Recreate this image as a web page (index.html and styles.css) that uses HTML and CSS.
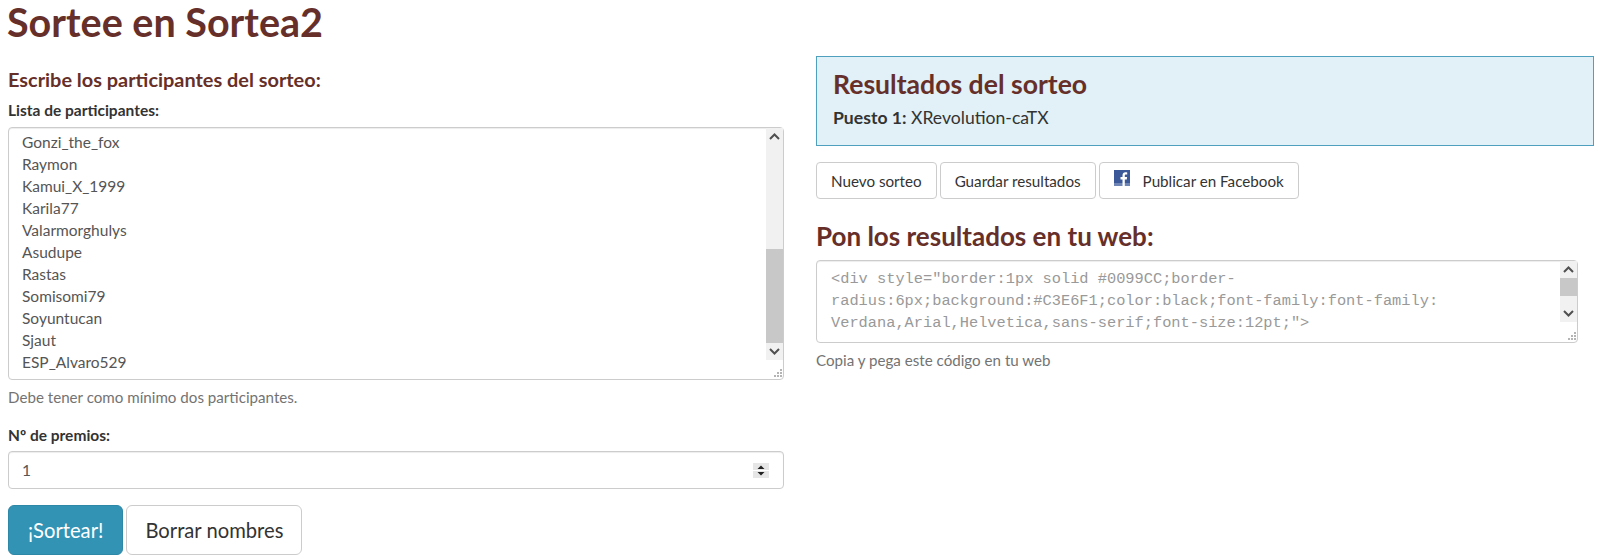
FILE: index.html
```html
<!DOCTYPE html>
<html lang="es">

<head>
    <meta charset="UTF-8">
    <meta name="viewport" content="width=device-width, initial-scale=1.0">
    <title>Sortee en Sortea2</title>
    <link rel="stylesheet" href="styles.css">
</head>

<body>
    <h1>Sortee en Sortea2</h1>

    <div class="columns">
        <!-- Participants form -->
        <form class="draw-form">
            <h2 class="form-title">Escribe los participantes del sorteo:</h2>

            <label class="field-label" for="names">Lista de participantes:</label>
            <div class="text-box names-box">
                <textarea id="names" class="text-area" spellcheck="false">Gonzi_the_fox
Raymon
Kamui_X_1999
Karila77
Valarmorghulys
Asudupe
Rastas
Somisomi79
Soyuntucan
Sjaut
ESP_Alvaro529</textarea>
                <div class="scrollbar">
                    <span class="scroll-btn">
                        <svg width="11" height="7" viewBox="0 0 11 7"><path d="M1 6l4.5-4.5L10 6" fill="none" stroke="#505050" stroke-width="2"/></svg>
                    </span>
                    <div class="scroll-track names-track"><div class="scroll-thumb names-thumb"></div></div>
                    <span class="scroll-btn">
                        <svg width="11" height="7" viewBox="0 0 11 7"><path d="M1 1l4.5 4.5L10 1" fill="none" stroke="#505050" stroke-width="2"/></svg>
                    </span>
                    <svg class="grip" width="9" height="9" viewBox="0 0 9 9"><path d="M7 0h2v2H7zM4 3h2v2H4zM7 3h2v2H7zM1 6h2v2H1zM4 6h2v2H4zM7 6h2v2H7z" fill="#b4b4b4"/></svg>
                </div>
            </div>
            <p class="help-text">Debe tener como mínimo dos participantes.</p>

            <label class="field-label prizes-label" for="prizes">Nº de premios:</label>
            <div class="text-box number-box">
                <input id="prizes" class="number-input" type="text" value="1">
                <span class="spinner">
                    <svg width="16" height="15" viewBox="0 0 16 15"><path d="M0 0h16v7H0zM0 8h16v7H0z" fill="#e6e6e6"/><path d="M8 2.5l3.5 3.5h-7zM8 12.5L4.5 9h7z" fill="#222"/></svg>
                </span>
            </div>

            <div class="btn-row">
                <button type="button" class="btn btn-large btn-primary">¡Sortear!</button>
                <button type="button" class="btn btn-large">Borrar nombres</button>
            </div>
        </form>

        <!-- Results -->
        <div class="results">
            <div class="result-panel">
                <h2 class="panel-title">Resultados del sorteo</h2>
                <p class="result-line"><strong>Puesto 1:</strong> XRevolution-caTX</p>
            </div>

            <div class="btn-row">
                <button type="button" class="btn">Nuevo sorteo</button>
                <button type="button" class="btn">Guardar resultados</button>
                <button type="button" class="btn btn-fb">
                    <svg class="fb-icon" width="16" height="16" viewBox="0 0 16 16"><rect width="16" height="16" fill="#3b5998"/><rect y="13" width="16" height="3" fill="#6d84b4"/><path d="M10.8 16V9.5h2l.3-2.4h-2.3V5.7c0-.7.2-1.1 1.2-1.1h1.2V2.4c-.3 0-.9-.1-1.7-.1-1.8 0-3 1.1-3 3.1v1.7h-2v2.4h2V16z" fill="#fff"/></svg>
                    Publicar en Facebook
                </button>
            </div>

            <h2 class="embed-title">Pon los resultados en tu web:</h2>
            <div class="text-box code-box">
                <textarea class="text-area code-area" spellcheck="false">&lt;div style="border:1px solid #0099CC;border-radius:6px;background:#C3E6F1;color:black;font-family:font-family: Verdana,Arial,Helvetica,sans-serif;font-size:12pt;"&gt;</textarea>
                <div class="scrollbar">
                    <span class="scroll-btn">
                        <svg width="11" height="7" viewBox="0 0 11 7"><path d="M1 6l4.5-4.5L10 6" fill="none" stroke="#505050" stroke-width="2"/></svg>
                    </span>
                    <div class="scroll-track code-track"><div class="scroll-thumb code-thumb"></div></div>
                    <span class="scroll-btn">
                        <svg width="11" height="7" viewBox="0 0 11 7"><path d="M1 1l4.5 4.5L10 1" fill="none" stroke="#505050" stroke-width="2"/></svg>
                    </span>
                    <svg class="grip" width="9" height="9" viewBox="0 0 9 9"><path d="M7 0h2v2H7zM4 3h2v2H4zM7 3h2v2H7zM1 6h2v2H1zM4 6h2v2H4zM7 6h2v2H7z" fill="#b4b4b4"/></svg>
                </div>
            </div>
            <p class="help-text">Copia y pega este código en tu web</p>
        </div>
    </div>
</body>

</html>
```

FILE: styles.css
```css
/* General Styles */
body {
    font-family: Lato, "Open Sans", sans-serif;
    font-size: 16px;
    line-height: 22px;
    color: #333;
    background-color: #fff;
    margin: 0;
    padding: 0 6px 0 8px;
    height: 557px;
    overflow: hidden;
    box-sizing: border-box;
}

h1,
h2 {
    color: #662f29;
    font-weight: 700;
    margin: 0;
}

h1 {
    font-size: 39.5px;
    line-height: 44px;
    margin-left: -1px;
}

.columns {
    display: grid;
    grid-template-columns: 776px 778px;
    column-gap: 32px;
}

/* Left form */
.form-title {
    font-size: 19.9px;
    line-height: 24px;
    margin-top: 23px;
}

.field-label {
    display: block;
    font-weight: 700;
    font-size: 15.5px;
    line-height: 22px;
    margin-top: 8px;
    margin-bottom: 6px;
}

.prizes-label {
    margin-top: 16px;
    margin-bottom: 5px;
}

.help-text {
    color: #737373;
    font-size: 15.15px;
    margin: 6px 0 0;
}

/* Boxes */
.text-box {
    display: flex;
    border: 1px solid #ccc;
    border-radius: 4px;
    box-shadow: inset 0 1px 1px rgba(0, 0, 0, 0.075);
    background-color: #fff;
    box-sizing: border-box;
}

.names-box {
    height: 253px;
}

.code-box {
    width: 762px;
    height: 83px;
}

.number-box {
    height: 38px;
    align-items: center;
    padding-right: 14px;
}

.text-area {
    flex: 1;
    min-width: 0;
    border: none;
    outline: none;
    resize: none;
    overflow: hidden;
    background: transparent;
    font-family: inherit;
    font-size: 15.5px;
    line-height: 22px;
    color: #555;
    padding: 3px 13px 0;
    margin: 0;
}

.code-area {
    font-family: "Liberation Mono", monospace;
    font-size: 15.33px;
    color: #999;
    padding: 7px 14px 0;
}

.number-input {
    flex: 1;
    min-width: 0;
    border: none;
    outline: none;
    background: transparent;
    font-family: inherit;
    font-size: 15.5px;
    color: #555;
    padding: 0 13px;
}

.spinner {
    display: flex;
}

/* Scrollbar */
.scrollbar {
    width: 17px;
    display: flex;
    flex-direction: column;
    position: relative;
}

.scroll-btn {
    height: 17px;
    background-color: #f1f1f1;
    display: flex;
    align-items: center;
    justify-content: center;
}

.scroll-track {
    background-color: #f1f1f1;
}

.names-track {
    height: 198px;
    padding-top: 104px;
    box-sizing: border-box;
}

.names-thumb {
    height: 94px;
}

.code-track {
    height: 27px;
}

.code-thumb {
    height: 18px;
}

.scroll-thumb {
    background-color: #c8c8c8;
}

.grip {
    position: absolute;
    right: 1px;
    bottom: 1px;
}

/* Buttons */
.btn-row {
    display: flex;
    gap: 3px;
}

.draw-form .btn-row {
    margin-top: 16px;
}

.btn {
    font-family: inherit;
    font-size: 15.2px;
    color: #333;
    background-color: #fff;
    border: 1px solid #ccc;
    border-radius: 4px;
    height: 37px;
    padding: 0 14px;
    cursor: pointer;
}

.btn-large {
    font-size: 20.2px;
    height: 50px;
    padding: 0 18px;
    border-radius: 6px;
}

.btn-primary {
    color: #fff;
    background-color: #3393b5;
    border-color: #2d87a7;
    padding: 0 19px;
}

.btn-fb {
    display: flex;
    align-items: center;
    gap: 13px;
}

.fb-icon {
    margin-top: -5px;
}

/* Results */
.results {
    margin-top: 12px;
}

.result-panel {
    height: 90px;
    background-color: #e1f1f7;
    border: 1px solid #4f9fbf;
    padding: 12px 16px 0;
    box-sizing: border-box;
    margin-bottom: 16px;
}

.panel-title {
    font-size: 26.6px;
    line-height: 30px;
}

.result-line {
    margin: 8px 0 0;
    font-size: 17.6px;
}

.embed-title {
    font-size: 26px;
    line-height: 32px;
    margin: 21px 0 8px;
}
```
